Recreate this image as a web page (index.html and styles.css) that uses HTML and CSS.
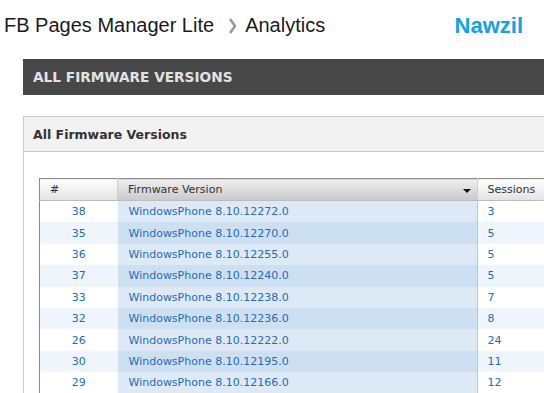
FILE: index.html
```html
<!DOCTYPE html>
<html lang="en">
<head>
  <meta charset="UTF-8">
  <title>Analytics</title>
  <link rel="stylesheet" href="styles.css">
</head>
<body>
  <div class="topbar">
    <div class="crumbs">
      <span class="crumb">FB Pages Manager Lite</span>
      <svg class="chev" width="9" height="18" viewBox="0 0 9 18"><polyline points="2,2 7,9 2,16" fill="none" stroke="#9a9a9a" stroke-width="2.6"/></svg>
      <span class="crumb">Analytics</span>
    </div>
    <div class="user">Nawzil</div>
  </div>

  <div class="section-bar">ALL FIRMWARE VERSIONS</div>

  <div class="panel">
    <div class="panel-head">All Firmware Versions</div>
    <div class="panel-body">
      <table class="grid">
        <thead>
          <tr>
            <th class="c-num">#</th>
            <th class="c-fw sorted">Firmware Version <span class="arrow"></span></th>
            <th class="c-ses">Sessions</th>
          </tr>
        </thead>
        <tbody>
          <tr><td class="c-num">38</td><td class="c-fw">WindowsPhone 8.10.12272.0</td><td class="c-ses">3</td></tr>
          <tr class="alt"><td class="c-num">35</td><td class="c-fw">WindowsPhone 8.10.12270.0</td><td class="c-ses">5</td></tr>
          <tr><td class="c-num">36</td><td class="c-fw">WindowsPhone 8.10.12255.0</td><td class="c-ses">5</td></tr>
          <tr class="alt"><td class="c-num">37</td><td class="c-fw">WindowsPhone 8.10.12240.0</td><td class="c-ses">5</td></tr>
          <tr><td class="c-num">33</td><td class="c-fw">WindowsPhone 8.10.12238.0</td><td class="c-ses">7</td></tr>
          <tr class="alt"><td class="c-num">32</td><td class="c-fw">WindowsPhone 8.10.12236.0</td><td class="c-ses">8</td></tr>
          <tr><td class="c-num">26</td><td class="c-fw">WindowsPhone 8.10.12222.0</td><td class="c-ses">24</td></tr>
          <tr class="alt"><td class="c-num">30</td><td class="c-fw">WindowsPhone 8.10.12195.0</td><td class="c-ses">11</td></tr>
          <tr><td class="c-num">29</td><td class="c-fw">WindowsPhone 8.10.12166.0</td><td class="c-ses">12</td></tr>
        </tbody>
      </table>
    </div>
  </div>
</body>
</html>
```

FILE: styles.css
```css
html,body{
  margin: 0;
  padding: 0;
  background: #ffffff;
  overflow: hidden;
}
body{
  width: 544px;
  height: 393px;
  font-family: "DejaVu Sans", Verdana, sans-serif;
}
.topbar{
  height: 59px;
  display: flex;
  align-items: flex-start;
  justify-content: space-between;
}
.crumbs{
  display: flex;
  align-items: center;
  padding: 14px 0 0 4px;
  font-family: "Liberation Sans", Arial, sans-serif;
  font-size: 20px;
  color: #1a1a1a;
}
.chev{
  margin: 0 8px 0 14px;
}
.user{
  padding: 13px 21px 0 0;
  font-family: "Liberation Sans", Arial, sans-serif;
  font-size: 22px;
  font-weight: bold;
  color: #12a2e6;
}
.section-bar{
  margin-left: 23px;
  height: 36px;
  line-height: 37px;
  padding-left: 10px;
  background: #484848;
  color: #e2e2e2;
  font-size: 13.7px;
  font-weight: bold;
}
.panel{
  margin: 21px 0 0 23px;
  border: 1px solid #cccccc;
  border-right: none;
}
.panel-head{
  height: 34px;
  line-height: 35px;
  padding-left: 9px;
  background: #f2f2f2;
  border-bottom: 1px solid #cccccc;
  color: #333333;
  font-size: 12.5px;
  font-weight: bold;
}
.panel-body{
  padding: 26px 0 0 15px;
}
.grid{
  border-collapse: collapse;
  font-size: 11px;
  width: 520px;
}
.grid th{
  height: 21px;
  padding: 0 0 0 10px;
  text-align: left;
  font-weight: normal;
  color: #333333;
  background: linear-gradient(#ffffff, #e2e2e2);
  border-top: 1px solid #8a8a8a;
  border-bottom: 1px solid #bcbcbc;
  border-right: 1px solid #d0d0d0;
}
.grid th.sorted{
  background: linear-gradient(#efefef, #c9c9c9);
  position: relative;
}
.arrow{
  position: absolute;
  right: 6px;
  top: 10px;
  border-left: 4px solid transparent;
  border-right: 4px solid transparent;
  border-top: 4px solid #111111;
}
.grid td{
  height: 21.4px;
  padding: 0 0 0 10px;
  color: #1f6db5;
  background: #ffffff;
}
.grid .alt td{
  background: #eef5fd;
}
.grid td.c-fw{
  background: #dde9f4;
  padding-left: 11px;
  border-right: 1px solid #c4c4c4;
}
.grid .alt td.c-fw{
  background: #cde0f1;
}
.c-num{
  width: 67px;
  border-left: 1px solid #8a8a8a;
}
.grid td.c-num{
  text-align: center;
  padding: 0;
  width: 77px;
}
.c-fw{
  width: 348px;
}
```
